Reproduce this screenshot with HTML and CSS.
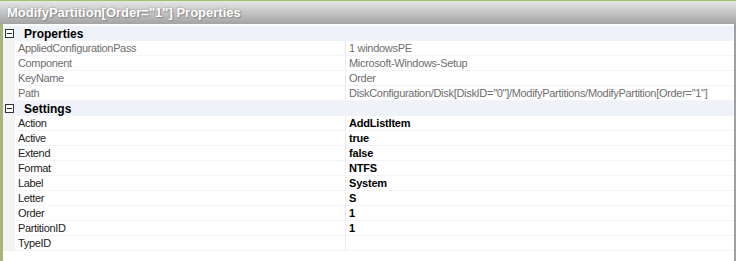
FILE: index.html
```html
<!DOCTYPE html>
<html>
<head>
<meta charset="utf-8">
<link rel="stylesheet" href="styles.css">
</head>
<body>
<div class="window">
  <div class="titlebar">ModifyPartition[Order="1"] Properties</div>
  <div class="grid">
    <div class="cat"><span class="box"></span><span class="cat-name">Properties</span></div>
    <div class="row"><span class="name">AppliedConfigurationPass</span><span class="val ro">1 windowsPE</span></div>
    <div class="row"><span class="name">Component</span><span class="val ro">Microsoft-Windows-Setup</span></div>
    <div class="row"><span class="name">KeyName</span><span class="val ro">Order</span></div>
    <div class="row"><span class="name">Path</span><span class="val ro">DiskConfiguration/Disk[DiskID="0"]/ModifyPartitions/ModifyPartition[Order="1"]</span></div>
    <div class="cat"><span class="box"></span><span class="cat-name">Settings</span></div>
    <div class="row"><span class="name dark">Action</span><span class="val set">AddListItem</span></div>
    <div class="row"><span class="name dark">Active</span><span class="val set">true</span></div>
    <div class="row"><span class="name dark">Extend</span><span class="val set">false</span></div>
    <div class="row"><span class="name dark">Format</span><span class="val set">NTFS</span></div>
    <div class="row"><span class="name dark">Label</span><span class="val set">System</span></div>
    <div class="row"><span class="name dark">Letter</span><span class="val set">S</span></div>
    <div class="row"><span class="name dark">Order</span><span class="val set">1</span></div>
    <div class="row"><span class="name dark">PartitionID</span><span class="val set">1</span></div>
    <div class="row"><span class="name dark">TypeID</span><span class="val set"></span></div>
  </div>
</div>
</body>
</html>
```
FILE: styles.css
```css
html, body {
  margin: 0;
  padding: 0;
  background: #ffffff;
}
.window {
  width: 736px;
  height: 261px;
  display: flex;
  flex-direction: column;
  font-family: "Liberation Sans", Arial, sans-serif;
  overflow: hidden;
}
.titlebar {
  height: 24px;
  box-sizing: border-box;
  border-top: 1px solid #9cc26a;
  background: linear-gradient(#e6e6e6, #c4c4c4 50%, #a3a3a3);
  color: #ffffff;
  font-weight: bold;
  font-size: 13px;
  line-height: 23px;
  padding-left: 7px;
  text-shadow: 0 0 2px #8a8a8a, 1px 1px 1px #8a8a8a;
  flex: none;
}
.grid {
  flex: 1;
  border-left: 3px solid #a9b47c;
  border-right: 2px solid #a0a0a0;
  background: #ffffff;
  display: flex;
  flex-direction: column;
  padding-top: 2px;
}
.cat {
  height: 15px;
  background: #eff3f9;
  display: flex;
  align-items: center;
  flex: none;
}
.box {
  width: 7px;
  height: 7px;
  border: 1px solid #333333;
  margin-left: 2px;
  position: relative;
  flex: none;
  background: #ffffff;
}
.box::after {
  content: "";
  position: absolute;
  left: 1px;
  top: 3px;
  width: 5px;
  height: 1px;
  background: #222222;
}
.cat-name {
  margin-left: 10px;
  font-weight: bold;
  font-size: 12px;
  color: #000000;
}
.row {
  height: 15px;
  box-sizing: border-box;
  display: flex;
  align-items: center;
  background: #f3f3f3;
  flex: none;
}
.name {
  width: 331px;
  height: 15px;
  box-sizing: border-box;
  margin-left: 12px;
  padding-left: 3px;
  background: #ffffff;
  border-bottom: 1px solid #f4f4f8;
  border-right: 1px solid #ececf0;
  font-size: 11px;
  line-height: 14px;
  color: #6e6e6e;
  white-space: nowrap;
  letter-spacing: -0.35px;
  flex: none;
}
.name.dark {
  color: #222222;
}
.val {
  flex: 1;
  height: 15px;
  box-sizing: border-box;
  padding-left: 3px;
  background: #ffffff;
  border-bottom: 1px solid #f4f4f8;
  font-size: 11px;
  line-height: 14px;
  white-space: nowrap;
  letter-spacing: -0.3px;
}
.val.ro {
  color: #6e6e6e;
}
.val.set {
  color: #000000;
  font-weight: bold;
  letter-spacing: -0.2px;
}
```
